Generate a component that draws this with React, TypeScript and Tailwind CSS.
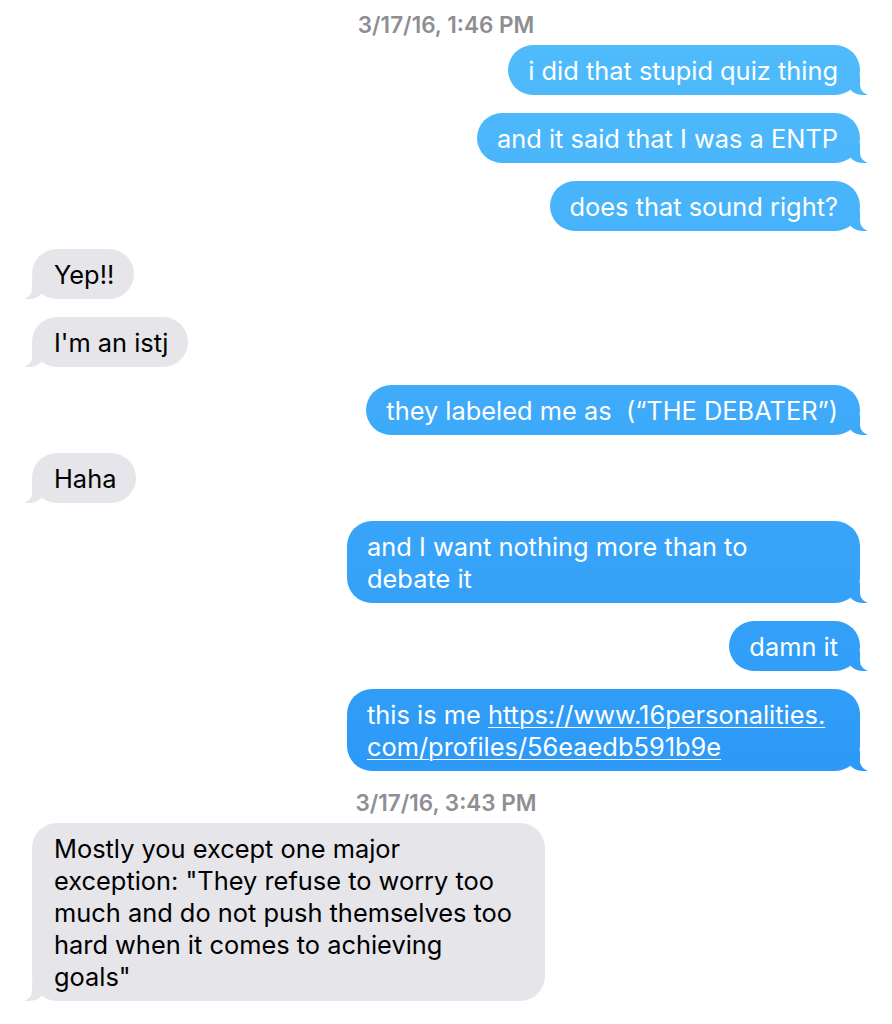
import type { ReactNode } from 'react';

type Msg =
  | { kind: 'time'; text: string; first?: boolean }
  | { kind: 'sent' | 'recv'; body: ReactNode; wide?: boolean; afterTime?: boolean };

const messages: Msg[] = [
  { kind: 'time', text: '3/17/16, 1:46 PM', first: true },
  { kind: 'sent', body: 'i did that stupid quiz thing', afterTime: true },
  { kind: 'sent', body: 'and it said that I was a ENTP' },
  { kind: 'sent', body: 'does that sound right?' },
  { kind: 'recv', body: 'Yep!!' },
  { kind: 'recv', body: "I'm an istj" },
  { kind: 'sent', body: 'they labeled me as \u00a0(\u201cTHE DEBATER\u201d)' },
  { kind: 'recv', body: 'Haha' },
  {
    kind: 'sent',
    wide: true,
    body: (
      <>
        and I want nothing more than to
        <br />
        debate it
      </>
    ),
  },
  { kind: 'sent', body: 'damn it' },
  {
    kind: 'sent',
    wide: true,
    body: (
      <>
        this is me <span className="underline decoration-1 underline-offset-[3px]">https://www.16personalities.</span>
        <br />
        <span className="underline decoration-1 underline-offset-[3px]">com/profiles/56eaedb591b9e</span>
      </>
    ),
  },
  { kind: 'time', text: '3/17/16, 3:43 PM' },
  {
    kind: 'recv',
    wide: true,
    afterTime: true,
    body: (
      <>
        Mostly you except one major
        <br />
        exception: "They refuse to worry too
        <br />
        much and do not push themselves too
        <br />
        hard when it comes to achieving
        <br />
        goals"
      </>
    ),
  },
];

const SentBubble = ({ children, wide, afterTime }: { children: ReactNode; wide?: boolean; afterTime?: boolean }) => (
  <div className={`flex justify-end ${afterTime ? 'mt-[9px]' : 'mt-[18px]'}`}>
    <div
      className={`relative whitespace-nowrap rounded-[25px] bg-linear-to-b from-[#52bdfb] to-[#1e8df6] bg-fixed pb-2 pl-5 pr-[22px] pt-[10px] text-white ${
        wide ? 'w-[513px]' : ''
      }`}
    >
      <div className="relative z-10">{children}</div>
      {/* tail */}
      <div className="absolute bottom-0 right-[-7px] h-5 w-5 rounded-bl-[16px_14px] bg-linear-to-b from-[#52bdfb] to-[#1e8df6] bg-fixed" />
      <div className="absolute bottom-0 right-[-26px] h-5 w-[26px] rounded-bl-[10px] bg-white" />
    </div>
  </div>
);

const RecvBubble = ({ children, wide, afterTime }: { children: ReactNode; wide?: boolean; afterTime?: boolean }) => (
  <div className={`flex justify-start ${afterTime ? 'mt-[9px]' : 'mt-[18px]'}`}>
    <div
      className={`relative whitespace-nowrap rounded-[25px] bg-[#e5e5ea] pb-2 pl-[22px] pr-5 pt-[10px] text-black ${
        wide ? 'w-[513px]' : ''
      }`}
    >
      <div className="relative z-10">{children}</div>
      {/* tail */}
      <div className="absolute bottom-0 left-[-7px] h-5 w-5 rounded-br-[16px_14px] bg-[#e5e5ea]" />
      <div className="absolute bottom-0 left-[-26px] h-5 w-[26px] rounded-br-[10px] bg-white" />
    </div>
  </div>
);

export default function App() {
  return (
    <div className="min-h-screen w-[892px] overflow-hidden bg-white px-8 pt-[14px] font-['Inter','Noto_Sans',sans-serif] text-[25.4px] leading-[32px]">
      {messages.map((m, i) => {
        if (m.kind === 'time') {
          return (
            <div
              key={i}
              className={`text-center text-[22.5px] font-semibold leading-[22px] text-[#8e8e93] ${m.first ? '' : 'mt-[21px]'}`}
            >
              {m.text}
            </div>
          );
        }
        if (m.kind === 'sent') {
          return (
            <SentBubble key={i} wide={m.wide} afterTime={m.afterTime}>
              {m.body}
            </SentBubble>
          );
        }
        return (
          <RecvBubble key={i} wide={m.wide} afterTime={m.afterTime}>
            {m.body}
          </RecvBubble>
        );
      })}
    </div>
  );
}
